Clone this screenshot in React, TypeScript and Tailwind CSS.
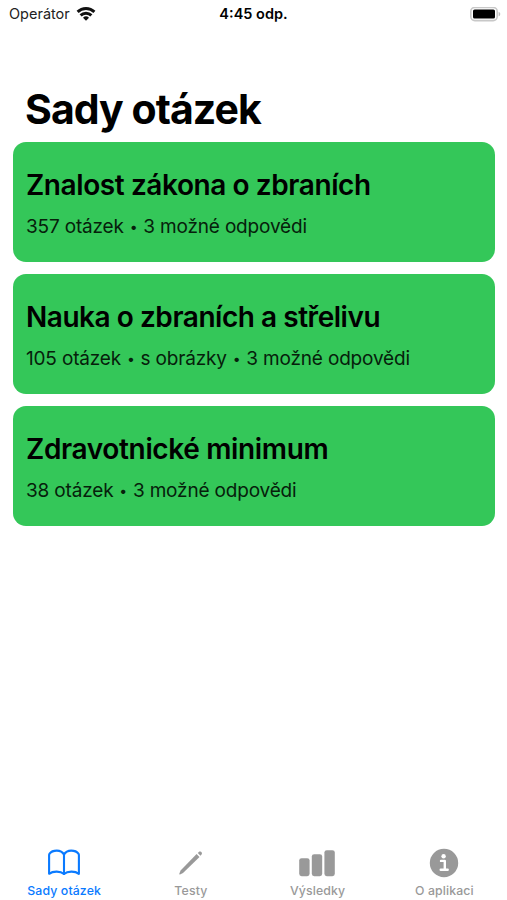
const sets = [
  { id: 1, title: "Znalost zákona o zbraních", info: ["357 otázek", "3 možné odpovědi"], titleSpacing: "tracking-[-0.41px]" },
  { id: 2, title: "Nauka o zbraních a střelivu", info: ["105 otázek", "s obrázky", "3 možné odpovědi"], titleSpacing: "tracking-[-0.46px]" },
  { id: 3, title: "Zdravotnické minimum", info: ["38 otázek", "3 možné odpovědi"], titleSpacing: "tracking-[-0.35px]" },
];

function WifiIcon() {
  return (
    <svg viewBox="0 0 20 15" className="w-5 h-[15px]" fill="none" stroke="#111" strokeWidth="2.9">
      <path d="M1.6 4.9a12 12 0 0 1 16.8 0" />
      <path d="M4.6 8.4a7.7 7.7 0 0 1 10.8 0" />
      <path d="M10 13.8 7 10.8a4.3 4.3 0 0 1 6 0Z" fill="#111" stroke="none" />
    </svg>
  );
}

function BatteryIcon() {
  return (
    <svg viewBox="0 0 31 15" className="w-[31px] h-[15px]">
      <rect x="0.8" y="0.4" width="26.4" height="13.2" rx="4" fill="#fff" stroke="#c8c8c8" strokeWidth="1.6" />
      <rect x="3" y="2.5" width="22" height="9" rx="1.6" fill="#000" />
      <path d="M28.6 4.7c2.2.8 2.2 3.8 0 4.6Z" fill="#bdbdbd" />
    </svg>
  );
}

function BookIcon() {
  return (
    <svg viewBox="0 0 32 28" className="w-8 h-7" fill="none" stroke="currentColor" strokeWidth="2.1" strokeLinecap="round" strokeLinejoin="round">
      <path d="M16 5.6C14.6 3 11.8 1.6 8.8 1.6 5.8 1.6 3 2.6 1.6 4.6c-.4.6-.5 1-.5 1.6v18.6c3.8-2.9 11.4-2.9 14.9.2 3.5-3.1 11.1-3.1 14.9-.2V6.2c0-.6-.1-1-.5-1.6-1.4-2-4.2-3-7.2-3S17.4 3 16 5.6Z" />
      <path d="M16 5.6V25" />
    </svg>
  );
}

function PencilIcon() {
  return (
    <svg viewBox="0 0 32 28" className="w-8 h-7" fill="currentColor">
      <path d="m21.6 5.1 2.9 2.9L8 24.1l-3 1.3c-.6.2-.9-.1-.7-.7l1.3-3.2Z" />
      <path d="m22.8 4 1-1c1.7-1.5 4.1.9 2.7 2.6l-1 1.1Z" />
    </svg>
  );
}

function BarsIcon() {
  return (
    <svg viewBox="0 0 36 28" className="-ml-[2px] w-9 h-7" fill="currentColor">
      <rect x="0.2" y="9.2" width="10.4" height="18" rx="2.4" />
      <rect x="12.8" y="5.2" width="10.4" height="22" rx="2.4" />
      <rect x="25.4" y="1.2" width="10.4" height="26" rx="2.4" />
    </svg>
  );
}

function InfoIcon() {
  return (
    <svg viewBox="0 0 30 30" className="w-[30px] h-[30px]">
      <circle cx="15" cy="15" r="14.2" fill="currentColor" />
      <circle cx="14.6" cy="8.3" r="2.2" fill="#fff" />
      <path d="M12 12.9h3.8v8.6M11.7 21.8h7" fill="none" stroke="#fff" strokeWidth="2.4" strokeLinecap="round" strokeLinejoin="round" />
    </svg>
  );
}

const tabs = [
  { id: "sets", label: "Sady otázek", icon: <BookIcon />, active: true },
  { id: "tests", label: "Testy", icon: <PencilIcon />, active: false },
  { id: "results", label: "Výsledky", icon: <BarsIcon />, active: false },
  { id: "about", label: "O aplikaci", icon: <InfoIcon />, active: false },
];

export default function App() {
  return (
    <div className="flex h-[900px] w-full flex-col overflow-hidden bg-white font-['Inter',sans-serif] text-black">
      <header className="grid h-7 grid-cols-3 items-center pl-[9px] pr-[6px]">
        <div className="flex items-center gap-[6px] text-[14.5px] text-[#222]">
          <span>Operátor</span>
          <WifiIcon />
        </div>
        <p className="pr-[3px] text-center text-[14.5px] font-semibold">4:45 odp.</p>
        <div className="flex justify-end">
          <BatteryIcon />
        </div>
      </header>

      <main className="flex-1 px-[13px] pt-[56px]">
        <h1 className="pl-3 text-[41px] leading-[50px] font-bold tracking-[-0.95px]">Sady otázek</h1>
        <div className="mt-[8.4px] flex flex-col gap-3">
          {sets.map((set) => (
            <button key={set.id} className="flex h-[120px] w-[482px] flex-col rounded-[13px] bg-[#34c759] px-[13px] pt-[25px] text-left whitespace-nowrap">
              <span className={`text-[28px] leading-9 font-semibold ${set.titleSpacing}`}>{set.title}</span>
              <span className="mt-[11.5px] flex items-center text-[19px] leading-6 tracking-[-0.17px] text-[#06200b]">
                {set.info.map((part, i) => (
                  <span key={part} className="flex items-center">
                    {i > 0 && <span className="w-[19.5px] text-center text-[14px]">•</span>}
                    {part}
                  </span>
                ))}
              </span>
            </button>
          ))}
        </div>
      </main>

      <nav className="grid h-[60px] grid-cols-4">
        {tabs.map((tab) => (
          <button key={tab.id} className={`flex flex-col items-center pt-2 pl-[1.5px] ${tab.active ? "text-[#0a7aff]" : "text-[#999]"}`}>
            <span className="flex h-[30px] items-center">{tab.icon}</span>
            <span className="mt-[5px] text-[12.3px] leading-4 font-medium tracking-[0.12px]">{tab.label}</span>
          </button>
        ))}
      </nav>
    </div>
  );
}
